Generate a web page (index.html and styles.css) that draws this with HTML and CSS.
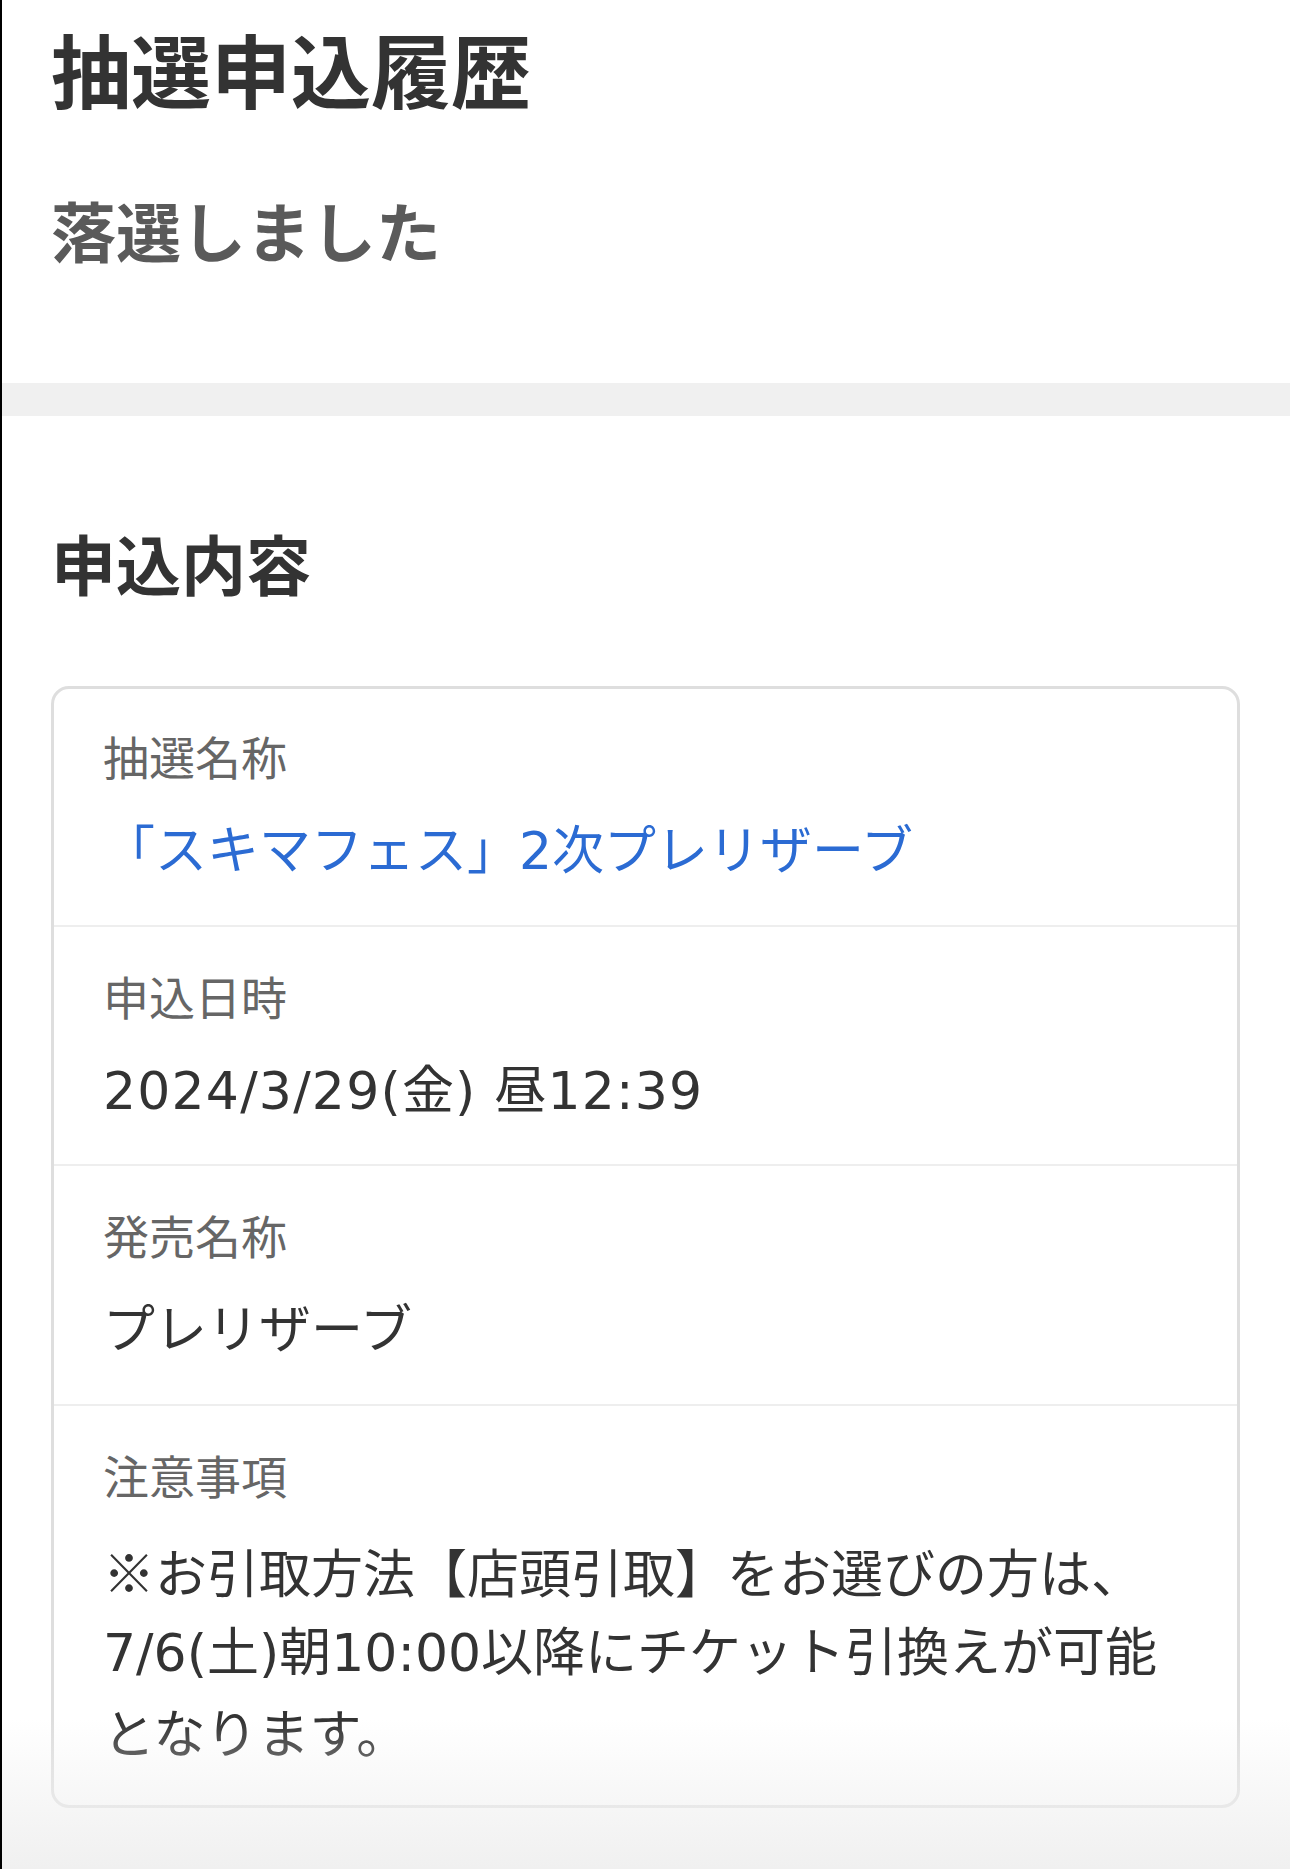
FILE: index.html
```html
<!DOCTYPE html>
<html lang="ja">
<head>
<meta charset="utf-8">
<title>抽選申込履歴</title>
<link rel="stylesheet" href="styles.css">
</head>
<body>
<div class="page">
  <header class="hero">
    <h1 class="title">抽選申込履歴</h1>
    <p class="status">落選しました</p>
  </header>
  <div class="band"></div>
  <section class="detail">
    <h2 class="section-title">申込内容</h2>
    <dl class="card">
      <div class="row">
        <dt class="label">抽選名称</dt>
        <dd class="value"><a class="link" href="#">「スキマフェス」2次プレリザーブ</a></dd>
      </div>
      <div class="row">
        <dt class="label">申込日時</dt>
        <dd class="value date">2024/3/29(金) 昼12:39</dd>
      </div>
      <div class="row">
        <dt class="label">発売名称</dt>
        <dd class="value">プレリザーブ</dd>
      </div>
      <div class="row">
        <dt class="label">注意事項</dt>
        <dd class="value note">
          <span class="note-line jp">※お引取方法【店頭引取】をお選びの方は、</span>
          <span class="note-line">7/6(土)朝10:00以降にチケット引換えが可能</span>
          <span class="note-line">となります。</span>
        </dd>
      </div>
    </dl>
  </section>
  <div class="fade"></div>
</div>
</body>
</html>
```
FILE: styles.css
```css
html, body {
  margin: 0;
  padding: 0;
}
body {
  background: #fff;
  font-family: "Noto Sans CJK JP", sans-serif;
}
.page {
  position: relative;
  min-height: 1869px;
  border-left: 2px solid #000;
  overflow: hidden;
}
.hero {
  padding: 19px 50px 115px 49px;
}
.title {
  margin: 0;
  font-size: 80px;
  line-height: 96px;
  font-weight: 700;
  color: #333;
}
.status {
  margin: 75px 0 0;
  font-size: 65px;
  line-height: 78px;
  font-weight: 700;
  color: #5a5a5a;
}
.band {
  height: 33px;
  background: #f0f0f0;
}
.detail {
  padding: 107px 50px 0 49px;
}
.section-title {
  margin: 0;
  font-size: 65px;
  line-height: 78px;
  font-weight: 700;
  color: #333;
}
.card {
  margin: 85px 0 0;
  border: 3px solid #dedede;
  border-radius: 18px;
  background: #fff;
}
.row {
  padding: 34px 49px 33px;
  border-top: 2px solid #eeeeee;
}
.row:first-child {
  border-top: 0;
  padding-top: 32px;
}
.row:last-child {
  padding-bottom: 29px;
}
.label {
  margin: 0;
  font-size: 46px;
  line-height: 69px;
  color: #666;
}
.value {
  margin: 21px 0 0;
  font-family: "DejaVu Sans", "Noto Sans CJK JP", sans-serif;
  font-size: 52px;
  line-height: 80.6px;
  color: #333;
}
.date {
  letter-spacing: 1.2px;
}
.note {
  line-height: 82px;
}
.note-line {
  display: block;
}
.jp {
  font-family: "Noto Sans CJK JP", sans-serif;
}
.link {
  color: #2b6bd3;
  text-decoration: none;
}
.fade {
  position: absolute;
  left: 0;
  right: 0;
  bottom: 0;
  height: 150px;
  background: linear-gradient(rgba(240, 240, 240, 0), #f0f0f0);
  pointer-events: none;
}
```
